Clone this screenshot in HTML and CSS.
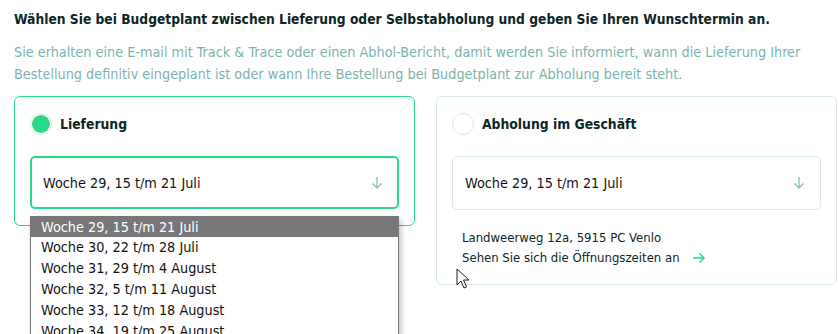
FILE: index.html
```html
<!DOCTYPE html>
<html lang="de">
<head>
  <meta charset="UTF-8" />
  <title>Lieferung - Budgetplant</title>
  <link rel="stylesheet" href="styles.css">
</head>
<body>
  <div class="delivery">
    <h2 class="delivery-title">Wählen Sie bei Budgetplant zwischen Lieferung oder Selbstabholung und geben Sie Ihren Wunschtermin an.</h2>
    <p class="delivery-intro">Sie erhalten eine E-mail mit Track &amp; Trace oder einen Abhol-Bericht, damit werden Sie informiert, wann die Lieferung Ihrer Bestellung definitiv eingeplant ist oder wann Ihre Bestellung bei Budgetplant zur Abholung bereit steht.</p>

    <div class="options">
      <!-- Lieferung -->
      <div class="option-card active">
        <div class="option-head">
          <span class="radio checked"></span>
          <span class="option-label">Lieferung</span>
        </div>
        <div class="select-wrap">
          <div class="select focused">
            <span>Woche 29, 15 t/m 21 Juli</span>
            <svg class="select-arrow" width="12" height="14" viewBox="0 0 12 14"><path d="M6 1v11M1.5 7.5L6 12l4.5-4.5" fill="none" stroke="#8cc2bb" stroke-width="1.4"/></svg>
          </div>
          <ul class="dropdown">
            <li class="selected">Woche 29, 15 t/m 21 Juli</li>
            <li>Woche 30, 22 t/m 28 Juli</li>
            <li>Woche 31, 29 t/m 4 August</li>
            <li>Woche 32, 5 t/m 11 August</li>
            <li>Woche 33, 12 t/m 18 August</li>
            <li>Woche 34, 19 t/m 25 August</li>
          </ul>
        </div>
      </div>

      <!-- Abholung -->
      <div class="option-card">
        <div class="option-head">
          <span class="radio"></span>
          <span class="option-label">Abholung im Geschäft</span>
        </div>
        <div class="select">
          <span>Woche 29, 15 t/m 21 Juli</span>
          <svg class="select-arrow" width="12" height="14" viewBox="0 0 12 14"><path d="M6 1v11M1.5 7.5L6 12l4.5-4.5" fill="none" stroke="#8cc2bb" stroke-width="1.4"/></svg>
        </div>
        <div class="pickup-info">
          <div>Landweerweg 12a, 5915 PC Venlo</div>
          <a class="pickup-link" href="#">Sehen Sie sich die Öffnungszeiten an
            <svg width="14" height="12" viewBox="0 0 14 12"><path d="M1 6h11M7.5 1.5L12 6l-4.5 4.5" fill="none" stroke="#2bd88a" stroke-width="1.5"/></svg>
          </a>
        </div>
        <svg class="cursor" width="14" height="22" viewBox="0 0 14 22"><path d="M1 1v16l4-4 3 7 2.5-1-3-7h5.5z" fill="#fff" stroke="#222" stroke-width="1"/></svg>
      </div>
    </div>
  </div>
</body>
</html>
```

FILE: styles.css
```css
* {
  box-sizing: border-box;
  margin: 0;
  padding: 0;
}

html,
body {
  height: 334px;
}

body {
  background-color: #fff;
  font-family: 'DejaVu Sans Condensed', 'DejaVu Sans', sans-serif;
  color: #0c2626;
}

.delivery {
  padding: 9px 0 0 14px;
  width: 837px;
}

.delivery-title {
  font-size: 13.7px;
  font-weight: bold;
  line-height: 20px;
  color: #0c2626;
}

.delivery-intro {
  margin-top: 12px;
  font-size: 14.3px;
  line-height: 22px;
  color: #7db3ae;
}

.options {
  margin-top: 11px;
  display: grid;
  grid-template-columns: 401px 401px;
  gap: 21px;
  align-items: start;
}

.option-card {
  position: relative;
  border: 1px solid #d9ebe8;
  border-radius: 6px;
  padding: 12px 15px 16px;
}

.option-card.active {
  border-color: #2bd88a;
}

.option-head {
  display: flex;
  align-items: center;
  gap: 8px;
  height: 30px;
}

.radio {
  width: 22px;
  height: 22px;
  border-radius: 50%;
  border: 1px solid #d9ebe8;
  display: flex;
  align-items: center;
  justify-content: center;
}

.radio.checked::after {
  content: "";
  width: 18px;
  height: 18px;
  border-radius: 50%;
  background-color: #2bd88a;
}

.option-label {
  font-size: 13.8px;
  font-weight: bold;
}

.select-wrap {
  position: relative;
}

.select {
  margin-top: 17px;
  height: 54px;
  border: 1px solid #d9ebe8;
  border-radius: 5px;
  display: flex;
  align-items: center;
  justify-content: space-between;
  padding: 0 15px 0 12px;
  font-size: 14.3px;
  color: #111;
}

.select.focused {
  height: 53px;
  border: 2px solid #2bd88a;
  padding: 0 14px 0 11px;
}

.dropdown {
  position: absolute;
  top: 60px;
  left: 0;
  width: 369px;
  list-style: none;
  background-color: #fff;
  border: 1px solid #777;
  box-shadow: 2px 3px 6px rgba(0, 0, 0, 0.25);
  font-size: 14.3px;
  color: #111;
  z-index: 2;
}

.dropdown li {
  height: 21px;
  line-height: 21px;
  padding-left: 10px;
}

.dropdown li.selected {
  height: 20px;
  line-height: 20px;
  background-color: #777;
  color: #fff;
}

.pickup-info {
  margin-top: 18px;
  padding-left: 10px;
  font-size: 13px;
  line-height: 20px;
  color: #0c2626;
}

.pickup-link {
  color: #0c2626;
  text-decoration: none;
  display: inline-flex;
  align-items: center;
  gap: 12px;
}

.cursor {
  position: absolute;
  left: 19px;
  top: 171px;
}
```
